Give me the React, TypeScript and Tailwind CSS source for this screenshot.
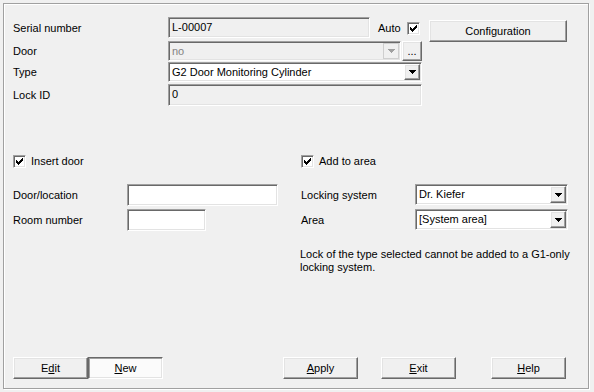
import type { ReactNode } from "react";

const SUNKEN =
  "border border-t-[#a0a0a0] border-l-[#a0a0a0] border-r-white border-b-white shadow-[inset_1px_1px_0_#696969,inset_-1px_-1px_0_#e3e3e3]";
const RAISED =
  "border border-t-white border-l-white border-r-[#696969] border-b-[#696969] shadow-[inset_-1px_-1px_0_#a0a0a0,inset_1px_1px_0_#e3e3e3]";
const PRESSED =
  "border border-t-[#696969] border-l-[#696969] border-r-white border-b-white shadow-[inset_1px_1px_0_#a0a0a0,inset_-1px_-1px_0_#e3e3e3]";

// classic 7x7 tick, one 3px column per x
const TICK_TOPS = [2, 3, 4, 3, 2, 1, 0];

function CheckBox() {
  return (
    <span className={`flex h-[13px] w-[13px] shrink-0 items-center justify-center bg-white ${SUNKEN}`}>
      <svg width="7" height="7" viewBox="0 0 7 7" shapeRendering="crispEdges" aria-hidden>
        {TICK_TOPS.map((y, x) => (
          <rect key={x} x={x} y={y} width="1" height="3" fill="#000" />
        ))}
      </svg>
    </span>
  );
}

function Arrow({ color = "#000" }: { color?: string }) {
  return (
    <svg width="7" height="4" viewBox="0 0 7 4" shapeRendering="crispEdges" aria-hidden>
      <rect x="0" y="0" width="7" height="1" fill={color} />
      <rect x="1" y="1" width="5" height="1" fill={color} />
      <rect x="2" y="2" width="3" height="1" fill={color} />
      <rect x="3" y="3" width="1" height="1" fill={color} />
    </svg>
  );
}

function Combo({
  value,
  className,
  disabled = false,
}: {
  value: string;
  className: string;
  disabled?: boolean;
}) {
  return (
    <div
      className={`flex p-[1px] ${SUNKEN} ${disabled ? "bg-[#f0f0f0]" : "bg-white"} ${className}`}
    >
      <span
        className={`flex flex-1 items-center pl-[2px] ${disabled ? "text-[#838383]" : "text-black"}`}
      >
        {value}
      </span>
      <span
        className={`flex w-[16px] items-center justify-center bg-[#f0f0f0] ${
          disabled ? "border border-[#cfcfcf]" : RAISED
        }`}
      >
        <Arrow color={disabled ? "#a0a0a0" : "#000"} />
      </span>
    </div>
  );
}

function Btn({
  children,
  className = "",
  pressed = false,
}: {
  children: ReactNode;
  className?: string;
  pressed?: boolean;
}) {
  return (
    <button
      type="button"
      className={`flex h-[22px] w-[75px] shrink-0 items-center justify-center text-black ${
        pressed ? `bg-[#fbfbfb] ${PRESSED}` : `bg-[#f0f0f0] ${RAISED}`
      } ${className}`}
    >
      {children}
    </button>
  );
}

function Label({ children, className }: { children: ReactNode; className: string }) {
  return <span className={`flex h-full shrink-0 items-center pt-[1px] ${className}`}>{children}</span>;
}

export default function App() {
  return (
    <div className="h-[392px] w-[594px] bg-[#f0f0f0] pl-[3px] pt-[3px] font-['Liberation_Sans',Arial,sans-serif] text-[11px] leading-[13px] text-black">
      <div className="flex h-[386px] w-[586px] flex-col border border-[#a0a0a0] px-[9px] pb-[9px] pt-[13px] shadow-[1px_1px_0_#fff,inset_1px_1px_0_#fff]">
        {/* identity block */}
        <div className="flex h-[21px] items-start">
          <Label className="w-[155px]">Serial number</Label>
          <div className={`flex h-[21px] w-[202px] items-center bg-[#f0f0f0] pl-[3px] ${SUNKEN}`}>L-00007</div>
          <span className="ml-[8px] flex h-full w-[29px] items-center pt-[1px]">Auto</span>
          <span className="mt-[5px]">
            <CheckBox />
          </span>
          <Btn className="ml-[9px] mt-[3px] !w-[138px]">Configuration</Btn>
        </div>

        <div className="mt-[3px] flex h-[20px] items-stretch">
          <Label className="w-[155px]">Door</Label>
          <Combo value="no" className="w-[233px]" disabled />
          <button
            type="button"
            className={`ml-[1px] flex w-[20px] items-end justify-center bg-[#f0f0f0] pb-[3px] leading-none ${RAISED}`}
          >
            ...
          </button>
        </div>

        <div className="mt-[1px] flex h-[20px]">
          <Label className="w-[155px]">Type</Label>
          <Combo value="G2 Door Monitoring Cylinder" className="w-[254px]" />
        </div>

        <div className="mt-[2px] flex h-[22px]">
          <Label className="w-[155px]">Lock ID</Label>
          <div className={`h-[22px] w-[254px] bg-[#f0f0f0] pl-[3px] pt-[3px] ${SUNKEN}`}>0</div>
        </div>

        {/* door / area block */}
        <div className="mt-[49px] flex">
          <div className="flex w-[288px] flex-col">
            <div className="flex items-center gap-[5px]">
              <CheckBox />
              <span>Insert door</span>
            </div>
            <div className="mt-[16px] flex h-[22px]">
              <Label className="w-[114px]">Door/location</Label>
              <div className={`h-[22px] w-[151px] bg-white ${SUNKEN}`} />
            </div>
            <div className="mt-[3px] flex h-[22px]">
              <Label className="w-[114px]">Room number</Label>
              <div className={`h-[22px] w-[79px] bg-white ${SUNKEN}`} />
            </div>
          </div>

          <div className="flex flex-1 flex-col">
            <div className="flex items-center gap-[5px]">
              <CheckBox />
              <span>Add to area</span>
            </div>
            <div className="mt-[16px] flex h-[21px]">
              <Label className="w-[114px]">Locking system</Label>
              <Combo value="Dr. Kiefer" className="w-[153px]" />
            </div>
            <div className="mt-[4px] flex h-[21px]">
              <Label className="w-[114px]">Area</Label>
              <Combo value="[System area]" className="w-[153px]" />
            </div>
            <p className="-ml-[1px] mt-[18px] w-[270px]">
              Lock of the type selected cannot be added to a G1-only locking system.
            </p>
          </div>
        </div>

        {/* action buttons */}
        <div className="mt-auto flex">
          <Btn>
            E<span className="underline">d</span>it
          </Btn>
          <Btn pressed>
            <span className="underline">N</span>ew
          </Btn>
          <Btn className="ml-[120px]">
            <span className="underline">A</span>pply
          </Btn>
          <Btn className="ml-[23px]">
            <span className="underline">E</span>xit
          </Btn>
          <Btn className="ml-[35px]">
            <span className="underline">H</span>elp
          </Btn>
        </div>
      </div>
    </div>
  );
}
